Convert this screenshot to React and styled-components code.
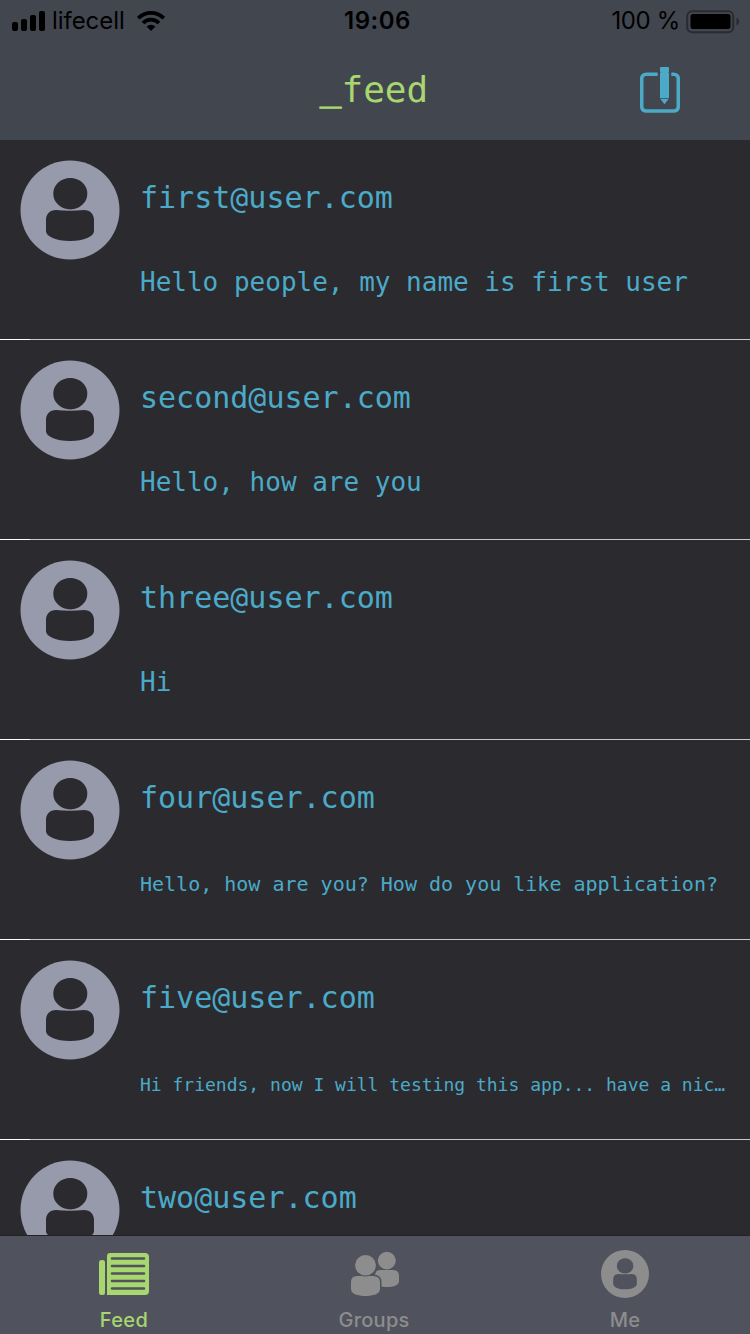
import React from 'react';
import styled, { createGlobalStyle } from 'styled-components';

const GlobalStyle = createGlobalStyle`
  * { box-sizing: border-box; }
  body { margin: 0; background: #2b2a2f; }
`;

const mono = `'DejaVu Sans Mono', monospace`;
const sans = `Inter, 'Liberation Sans', sans-serif`;

const Screen = styled.div`
  display: flex;
  flex-direction: column;
  width: 750px;
  height: 1334px;
  overflow: hidden;
  background: #2b2a2f;
`;

const Header = styled.header`
  flex: none;
  height: 140px;
  background: #42464f;
`;

const StatusBar = styled.div`
  display: grid;
  grid-template-columns: 1fr auto 1fr;
  height: 40px;
  padding: 0 10px 0 12px;
  font-family: ${sans};
  color: #000;
`;

const StatusGroup = styled.div`
  display: flex;
  align-items: center;
  justify-content: ${(p) => (p.$end ? 'flex-end' : 'flex-start')};
`;

const StatusText = styled.span`
  font-size: 24px;
  line-height: 40px;
  padding-top: 1px;
  padding-left: ${(p) => p.$indent || 0}px;
  white-space: pre;
  font-weight: ${(p) => p.$weight || 400};
  letter-spacing: ${(p) => p.$spacing || 0}px;
`;

const SignalIcon = styled.svg`
  width: 34px;
  height: 40px;
  margin-right: 6px;
`;

const WifiIcon = styled.svg`
  width: 28px;
  height: 40px;
  margin-left: 12px;
`;

const BatteryIcon = styled.svg`
  width: 54px;
  height: 40px;
  margin-left: 6px;
`;

const TitleBar = styled.div`
  display: grid;
  grid-template-columns: 1fr auto 1fr;
  height: 100px;
`;

const Title = styled.h1`
  grid-column: 2;
  margin: 0;
  padding-right: 2px;
  font: 400 36px/99px ${mono};
  color: #a8d66f;
`;

const Prefix = styled.span`
  display: inline-block;
  line-height: 1;
  transform: translateY(-2px);
  -webkit-text-stroke: 1px currentColor;
`;

const ComposeButton = styled.button`
  justify-self: end;
  width: 40px;
  height: 48px;
  margin: 26px 70px 0 0;
  padding: 0;
  border: 0;
  background: none;
`;

const Feed = styled.main`
  flex: 1;
  min-height: 0;
  overflow: hidden;
`;

const Post = styled.article`
  display: flex;
  gap: 20px;
  height: 199px;
  padding: 20px 20px 0;
`;

const Divider = styled.div`
  height: 1px;
  background: linear-gradient(to right, #ffffff 30px, #c8c7cc 30px);
`;

const AvatarSvg = styled.svg`
  display: block;
  flex: none;
  width: ${(p) => p.$size}px;
  height: ${(p) => p.$size}px;
`;

const PostBody = styled.div`
  flex: 1;
  min-width: 0;
  color: #4baac8;
`;

const Author = styled.div`
  font: 400 30px/76px ${mono};
`;

const Message = styled.div`
  margin-top: ${(p) => p.$gap}px;
  font: 400 ${(p) => p.$size}px/40px ${mono};
  white-space: nowrap;
`;

const TabBar = styled.nav`
  flex: none;
  display: grid;
  grid-template-columns: 250px 250px 250px;
  height: 99px;
  border-top: 1px solid #222126;
  background: #50535d;
`;

const Tab = styled.div`
  display: flex;
  flex-direction: column;
  align-items: center;
  padding: 12px ${(p) => (p.$last ? 0 : 2)}px 0 0;
  color: ${(p) => (p.$active ? '#a8d66f' : '#8d8d8d')};
`;

const TabIcon = styled.svg`
  display: block;
  width: 52px;
  height: 52px;
`;

const TabLabel = styled.span`
  margin-top: 8px;
  font: 500 20px/24px ${sans};
  letter-spacing: ${(p) => p.$spacing}px;
`;

const posts = [
  { author: 'first@user.com', text: 'Hello people, my name is first user', size: 26, gap: 26 },
  { author: 'second@user.com', text: 'Hello, how are you', size: 26, gap: 26 },
  { author: 'three@user.com', text: 'Hi', size: 26, gap: 26 },
  { author: 'four@user.com', text: 'Hello, how are you? How do you like application?', size: 20, gap: 28 },
  { author: 'five@user.com', text: 'Hi friends, now I will testing this app... have a nic…', size: 18, gap: 29 },
  { author: 'two@user.com', text: '', size: 26, gap: 26 },
];

function Avatar({ size, color, hole }) {
  return (
    <AvatarSvg $size={size} viewBox="0 0 100 100">
      <circle cx="50" cy="50" r="49.5" fill={color} />
      <ellipse cx="50.3" cy="33.7" rx="17" ry="15.8" fill={hole} />
      <path
        d="M36 50 Q50 51.5 64 50 C70 50 74 54 74 60 V71 C74 76.5 64 81 50 81 C36 81 26 76.5 26 71 V60 C26 54 30 50 36 50Z"
        fill={hole}
      />
    </AvatarSvg>
  );
}

export default function App() {
  return (
    <Screen>
      <GlobalStyle />
      <Header>
        <StatusBar>
          <StatusGroup>
            <SignalIcon viewBox="0 0 34 40">
              <rect x="0" y="21" width="6" height="9" rx="2" />
              <rect x="9" y="18" width="6" height="12" rx="2" />
              <rect x="18" y="14" width="6" height="16" rx="2" />
              <rect x="27" y="10" width="6" height="20" rx="2" />
            </SignalIcon>
            <StatusText $spacing={-0.05}>lifecell</StatusText>
            <WifiIcon viewBox="0 0 28 40">
              <g fill="none" stroke="#000" strokeWidth="3.8">
                <path d="M1.3 17.2 A18 18 0 0 1 26.7 17.2" />
                <path d="M6 22 A11.3 11.3 0 0 1 22 22" />
              </g>
              <path d="M9.6 25.6 A6.3 6.3 0 0 1 18.4 25.6 L14 30Z" />
            </WifiIcon>
          </StatusGroup>
          <StatusText $weight={600} $spacing={0.5} $indent={3}>19:06</StatusText>
          <StatusGroup $end>
            <StatusText $spacing={-0.35}>100 %</StatusText>
            <BatteryIcon viewBox="0 0 54 40">
              <rect x="1.2" y="10.2" width="46" height="21" rx="5" fill="none" stroke="#292b31" strokeWidth="2" />
              <rect x="4.5" y="13" width="40" height="15" rx="2.5" />
              <path d="M50.5 16.5 C54 18 54 23 50.5 24.5Z" fill="#292b31" />
            </BatteryIcon>
          </StatusGroup>
        </StatusBar>
        <TitleBar>
          <Title><Prefix>_</Prefix>feed</Title>
          <ComposeButton aria-label="Compose">
            <svg width="40" height="48" viewBox="0 0 40 48">
              <path
                d="M17.7 8.3 H6.5 Q1.7 8.3 1.7 13 V40 Q1.7 45 6.5 45 H33.5 Q38.3 45 38.3 40 V13 Q38.3 8.3 33.5 8.3 H31.3"
                fill="none"
                stroke="#4baac8"
                strokeWidth="3.6"
              />
              <path d="M21 1 H28 Q29 1 29 2 V5.6 L28.4 6.4 L29 7.2 V32 H20 V7.2 L20.6 6.4 L20 5.6 V2 Q20 1 21 1Z" fill="#4baac8" />
              <path d="M20.2 32.8 H28.8 L24.5 38.3Z" fill="#4baac8" />
            </svg>
          </ComposeButton>
        </TitleBar>
      </Header>
      <Feed>
        {posts.map((post) => (
          <React.Fragment key={post.author}>
            <Post>
              <Avatar size={100} color="#969aab" hole="#2b2a2f" />
              <PostBody>
                <Author>{post.author}</Author>
                <Message $size={post.size} $gap={post.gap}>{post.text}</Message>
              </PostBody>
            </Post>
            <Divider />
          </React.Fragment>
        ))}
      </Feed>
      <TabBar>
        <Tab $active>
          <TabIcon viewBox="0 0 52 52">
            <path
              d="M12 5 H47 Q51 5 51 9 V43 Q51 47 47 47 H9 V8 Q9 5 12 5Z"
              fill="#a8d66f"
            />
            <rect x="1" y="12" width="6" height="35" rx="2.5" fill="#a8d66f" />
            <path
              d="M14 10.5 H46 M14 18 H46 M14 25.5 H46 M14 33 H46 M14 40.5 H46"
              stroke="#50535d"
              strokeWidth="2.6"
              strokeLinecap="round"
            />
          </TabIcon>
          <TabLabel $spacing={0.35}>Feed</TabLabel>
        </Tab>
        <Tab>
          <TabIcon viewBox="0 0 52 52" fill="#8d8d8d">
            <ellipse cx="38.8" cy="12.6" rx="9" ry="8.8" />
            <path d="M32 22 H45 Q51 22 51 28 V33 C51 37 46 39 39 39 C32 39 27 37 27 33 V28 Q27 22 32 22Z" />
            <path
              d="M9 28 H25 Q32 28 32 34 V41 C32 46 25 48 17.5 48 C10 48 3 46 3 41 V34 Q3 28 9 28Z"
              stroke="#50535d"
              strokeWidth="3"
              paintOrder="stroke"
            />
            <ellipse cx="17.5" cy="17.3" rx="10.4" ry="10.3" stroke="#50535d" strokeWidth="2" paintOrder="stroke" />
          </TabIcon>
          <TabLabel $spacing={0.25}>Groups</TabLabel>
        </Tab>
        <Tab $last>
          <TabIcon viewBox="0 0 52 52">
            <circle cx="26" cy="26" r="24" fill="#8d8d8d" />
            <ellipse cx="26.1" cy="17.9" rx="8.3" ry="7.7" fill="#50535d" />
            <path
              d="M19 26 Q26 26.6 33 26 Q37.8 26.5 37.8 31 V36 C37.8 39 33 41.3 26 41.3 C19 41.3 14.2 39 14.2 36 V31 Q14.2 26.5 19 26Z"
              fill="#50535d"
            />
          </TabIcon>
          <TabLabel $spacing={0.3}>Me</TabLabel>
        </Tab>
      </TabBar>
    </Screen>
  );
}
